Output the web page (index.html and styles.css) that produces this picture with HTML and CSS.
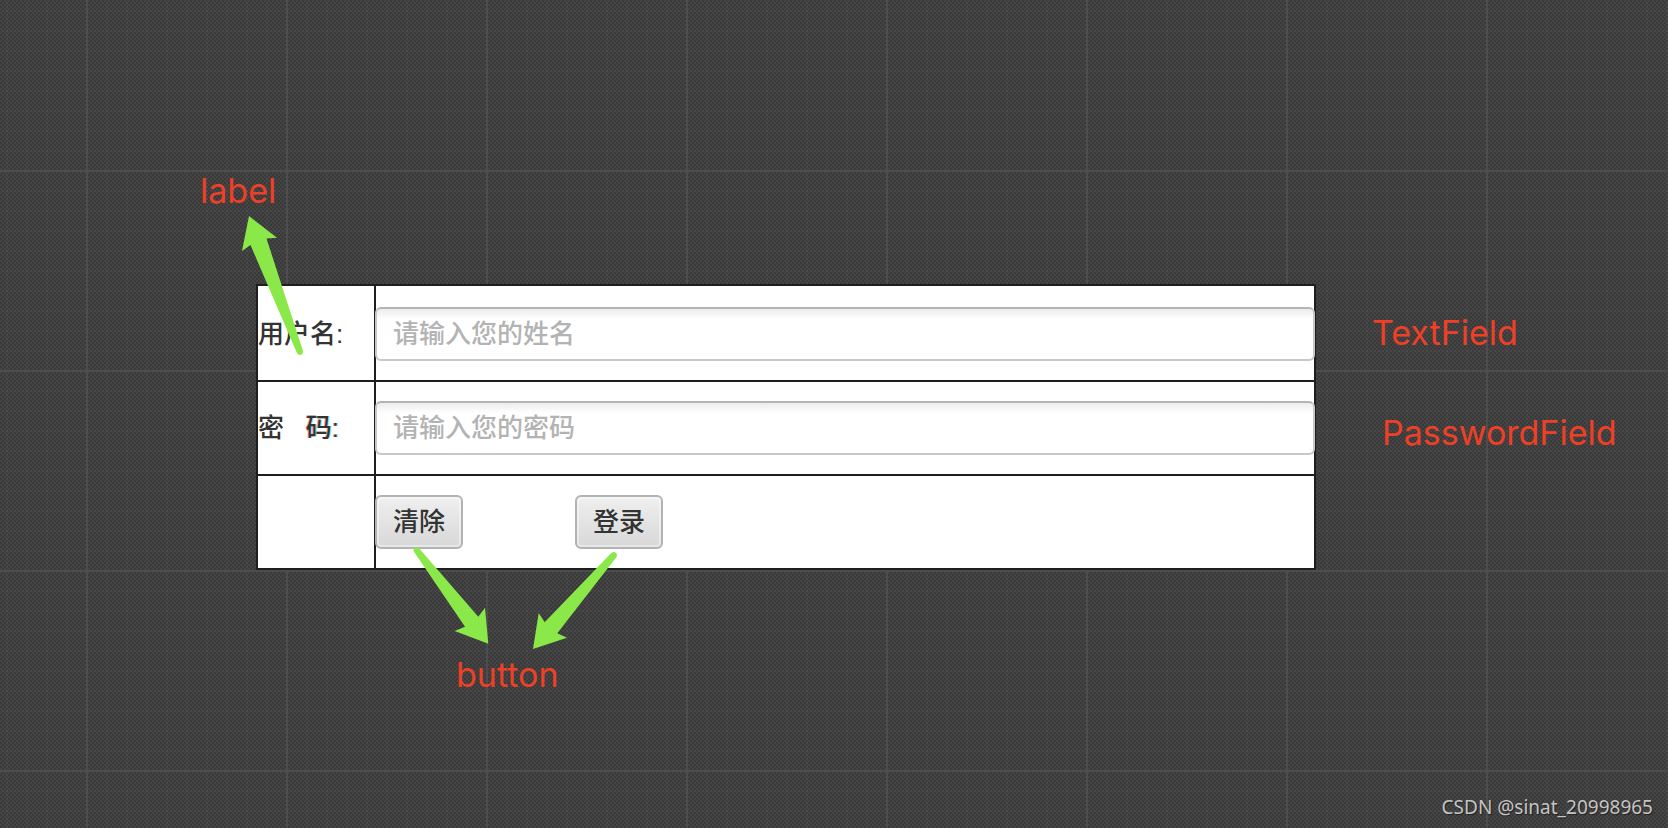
FILE: index.html
```html
<!DOCTYPE html>
<html lang="zh-CN">
<head>
<meta charset="utf-8">
<title>登录</title>
<link rel="stylesheet" href="styles.css">
</head>
<body>
<main class="canvas">
  <p class="note note-label">label</p>
  <form class="login">
    <div class="cell"><label class="caption" for="user">用户名:</label></div>
    <div class="cell control"><input class="field" id="user" type="text" placeholder="请输入您的姓名"></div>
    <div class="cell"><label class="caption" for="pass">密   <span class="fringe">码:</span></label></div>
    <div class="cell control"><input class="field" id="pass" type="password" placeholder="请输入您的密码"></div>
    <div class="cell"></div>
    <div class="cell control actions">
      <button class="btn" type="reset">清除</button>
      <button class="btn" type="button">登录</button>
    </div>
    <svg class="arrows" width="400" height="450" viewBox="240 210 400 450" aria-hidden="true">
      <path d="M249 216L277 237.7L266.5 238.5L303 351Q303 355 299.500 355Q297.500 355 296.500 352L250.500 245L242 251Z"/>
      <path d="M488.300 643.700L485 607.700L478.300 616.700L419.700 549Q417 546 414.500 548Q412.500 550 414.500 552.500L465 626.700L454.700 631Z"/>
      <path d="M533 649L538.700 613L544.700 622.300L611.300 553Q614 551 616 553Q618 555 616.500 557L557.300 633.300L567 637.700Z"/>
    </svg>
  </form>
  <aside class="side">
    <p class="note note-text">TextField</p>
    <p class="note note-password">PasswordField</p>
  </aside>
  <p class="note note-button">button</p>
  <footer class="credit">CSDN @sinat_20998965</footer>
</main>
</body>
</html>
```

FILE: styles.css
```css
* {
  box-sizing: border-box;
}

body {
  margin: 0;
  color: #333;
  font-family: "Liberation Sans", "Noto Sans CJK SC", sans-serif;
}

.canvas {
  display: grid;
  grid-template-columns: 256px 1fr 352px;
  grid-template-rows: 284px auto 1fr auto;
  min-height: 100vh;
  background-color: #434343;
  background-image:
    linear-gradient(90deg, #4d4d4d 2px, transparent 2px),
    linear-gradient(#4d4d4d 2px, transparent 2px),
    linear-gradient(90deg, rgba(255, 255, 255, 0.02) 2px, transparent 2px),
    linear-gradient(rgba(255, 255, 255, 0.02) 2px, transparent 2px),
    repeating-conic-gradient(#393939 0 25%, #454545 0 50%);
  background-size: 200px 200px, 200px 200px, 20px 20px, 20px 20px, 4px 4px;
  background-position: 86px 0, 0 170px, 6px 0, 0 10px, 0 0;
}

.note {
  margin: 0;
  color: #ee4026;
  font-family: Inter, sans-serif;
  font-size: 34px;
  line-height: 44px;
}

.note-label {
  grid-column: 1 / 3;
  grid-row: 1;
  padding: 169px 0 0 200px;
}

.login {
  position: relative;
  grid-column: 2;
  grid-row: 2;
  display: grid;
  grid-template-columns: 116px 1fr;
  grid-template-rows: 94px 92px 92px;
  gap: 2px;
  padding: 2px;
  background: #1e1e1e;
}

.cell {
  display: flex;
  align-items: flex-end;
  padding-bottom: 26px;
  background: #fff;
}

.control {
  padding-bottom: 19px;
}

.caption {
  font-size: 26px;
  font-weight: 500;
  line-height: 40px;
  white-space: pre;
}

.fringe {
  text-shadow: -1px 0 rgba(255, 0, 0, 0.4), 1px 0 rgba(0, 220, 220, 0.5);
}

.field {
  flex: 1;
  height: 54px;
  margin: 0 -1px;
  padding: 0 16px;
  border: 2px solid #c8c8c8;
  border-top-color: #b4b4b4;
  border-radius: 6px;
  background: linear-gradient(#ececec, #fff 10px);
  color: #333;
  font: inherit;
  font-size: 26px;
  font-weight: 500;
}

.field::placeholder {
  color: #b3b3b3;
  opacity: 1;
}

.actions {
  gap: 112px;
}

.btn {
  position: relative;
  left: -1px;
  width: 88px;
  height: 54px;
  padding: 0 0 5px;
  border: 2px solid #b3b3b3;
  border-radius: 6px;
  background: linear-gradient(#efefef, #d8d8d8);
  box-shadow: inset 0 0 0 2px rgba(255, 255, 255, 0.4);
  color: #333;
  font: inherit;
  font-size: 26px;
  font-weight: 500;
}

.arrows {
  position: absolute;
  left: -16px;
  top: -74px;
  fill: #8ae848;
  pointer-events: none;
}

.side {
  grid-column: 3;
  grid-row: 2;
  display: flex;
  flex-direction: column;
  gap: 56px;
  padding: 27px 0 0 56px;
}

.note-password {
  padding-left: 10px;
}

.note-button {
  grid-column: 2;
  grid-row: 3;
  padding: 83px 0 0 200px;
}

.credit {
  grid-column: 2 / 4;
  grid-row: 4;
  padding: 0 15px 7px 0;
  color: #c4c4c4;
  font-family: "Noto Sans", sans-serif;
  font-size: 19px;
  line-height: 28px;
  text-align: right;
  text-shadow: 1px 1px 1px #222;
}
```
